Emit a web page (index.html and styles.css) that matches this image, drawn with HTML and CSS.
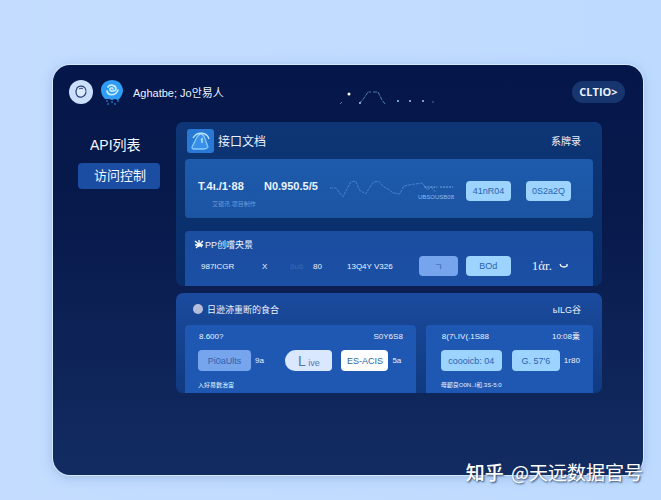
FILE: index.html
```html
<!DOCTYPE html>
<html lang="zh-CN">
    <head>
        <meta charset="UTF-8">
        <meta name="viewport" content="width=device-width, initial-scale=1.0">
        <title>接口文档</title>
        <link rel="stylesheet" href="styles.css">
    </head>
    <body>
        <div class="window">
            <header class="header">
                <svg class="avatar" viewBox="0 0 24 24">
                    <circle cx="12" cy="12" r="12" fill="#c9dffc"/>
                    <path d="M8 8C9 6 14 5 16 8C18 11 17 16 13 17C9 18 7 15 7 12C7 10 8 9 8 8Z" fill="#dceafd" stroke="#23406f" stroke-width="1.2"/>
                    <path d="M10 9C11 8 13 8 14 9" fill="none" stroke="#23406f"/>
                </svg>
                <svg class="badge" viewBox="0 0 24 26">
                    <path d="M5 3Q12-1 19 3Q23 7 23 12Q22 18 18 21L15 20L12 21L9 20L5 20Q1 16 1 11Q1 6 5 3Z" fill="#2f9df5"/>
                    <path d="M8 8C10 5 16 6 16 10C16 12 11 13 10 11C9 9 13 8 13 10M7 12C8 17 16 17 18 11" fill="none" stroke="#c5ebff" stroke-width="1.7" stroke-linecap="round"/>
                    <path d="M6 22h2M7 25h2M11 23h2M14 25h2M17 22h2" stroke="#1b6cc0" stroke-width="1.5"/>
                </svg>
                <h1 class="brand">Aghatbe; Jo안易人</h1>
                <svg class="spark" viewBox="0 0 96 16">
                    <circle cx="10" cy="4" r="1.5" fill="#fff"/>
                    <path d="M1 14l2-2M20 13l3-2 6-9h3M34 2h5l4 8 3 4" fill="none" stroke="#4d81a8" stroke-dasharray="4 1"/>
                    <g fill="#a9c8e8">
                        <circle cx="21" cy="13" r="1"/>
                        <circle cx="59" cy="11" r="1"/>
                        <circle cx="71" cy="11" r="1"/>
                        <circle cx="84" cy="11" r="1"/>
                        <circle cx="94" cy="12" r="1" fill="#35557f"/>
                    </g>
                </svg>
                <button class="pill">CLTIO&gt;</button>
            </header>

            <div class="layout">
                <nav class="sidebar">
                    <a href="#" class="nav-link">API列表</a>
                    <a href="#" class="nav-link active">访问控制</a>
                </nav>

                <main class="content">
                    <section class="panel panel-docs">
                        <div class="panel-header">
                            <svg class="panel-icon" viewBox="0 0 27 24">
                                <rect width="27" height="24" rx="3" fill="#2878d4"/>
                                <path d="M5 18L10 8Q13 3 17 7L21 18Q20 20 17 20H7Q5 20 5 18Z" fill="#3990e8" stroke="#86ccff" stroke-width="1.3"/>
                                <path d="M6 9C10 2 20 3 22 10M14 11l1-1v4" fill="none" stroke="#b9e5ff" stroke-width="1.4"/>
                            </svg>
                            <h2 class="panel-title">接口文档</h2>
                            <a href="#" class="more">系牌录</a>
                        </div>

                        <div class="card card-stats">
                            <div class="stat">
                                <strong>T.4ι./1·88</strong>
                                <small>艾锁讯.项目制作</small>
                            </div>
                            <strong class="stat">N0.950.5/5</strong>
                            <div class="chart">
                                <svg viewBox="0 0 126 22">
                                    <path d="M0 10h6l7 9 8-15 5-1 4 9 6 4 8-12 5-1 6 6 4 2 5 4 7 1 4-8 10-2 9-1 5 7 4-3 4 5" fill="none" stroke="#4585cc" stroke-dasharray="3 1"/>
                                    <path d="M96 9h13M112 9h13" stroke="#76aee8" stroke-dasharray="2 1"/>
                                </svg>
                                <small>UBSOUSB08</small>
                            </div>
                            <button class="btn">41nR04</button>
                            <button class="btn">0S2a2Q</button>
                        </div>

                        <div class="card card-keys">
                            <h3 class="card-title">
                                <svg viewBox="0 0 10 10">
                                    <path d="M1 2l7 6M9 2L2 9M5 1v7M1 6h8" stroke="#fff" stroke-width="1.3"/>
                                </svg>
                                PP创嚐央景
                            </h3>
                            <div class="key-row">
                                <span>987ICGR</span>
                                <span>X</span>
                                <span class="faint">8u6</span>
                                <span>80</span>
                                <span>13Q4Y V326</span>
                                <button class="btn btn-muted">ㄱ</button>
                                <button class="btn">BOd</button>
                                <span class="state">1ἀr.</span>
                                <svg class="chevron" viewBox="0 0 10 6">
                                    <path d="M1 1l1 2q3 2 6 0V1" fill="none" stroke="#fff" stroke-width="1.3"/>
                                </svg>
                            </div>
                        </div>
                    </section>

                    <section class="panel panel-logs">
                        <div class="panel-header">
                            <span class="dot"></span>
                            <h2 class="logs-title">日逊洂重断的食合</h2>
                            <a href="#" class="more small">ьILG谷</a>
                        </div>
                        <div class="cards">
                            <div class="card log">
                                <div class="log-top"><span>8.600?</span><span>S0Y6S8</span></div>
                                <div class="log-row">
                                    <button class="btn btn-muted wide">Pi0aUlts</button>
                                    <span class="count">9a</span>
                                    <button class="btn btn-live"><b>L</b> ive</button>
                                    <button class="btn btn-white">ES-ACIS</button>
                                    <span class="count">5a</span>
                                </div>
                                <small>入好易數治宙</small>
                            </div>
                            <div class="card log">
                                <div class="log-top"><span>8(7\.IV(.1S88</span><span>10:08乗</span></div>
                                <div class="log-row">
                                    <button class="btn wide">coooicb: 04</button>
                                    <button class="btn btn-value">G. 57'6</button>
                                    <span class="count">1r80</span>
                                </div>
                                <small>母郵良O0N..I和.3S-5:0</small>
                            </div>
                        </div>
                    </section>
                </main>
            </div>
        </div>
        <div class="watermark"><b>知乎</b> @天远数据官号</div>
    </body>
</html>
```

FILE: styles.css
```css
* {
    margin: 0;
    padding: 0;
    box-sizing: border-box;
}

body {
    min-height: 100vh;
    display: flex;
    padding: 65px 18px 25px 53px;
    background: linear-gradient(90deg, #c3dcff, #bedbff);
    font-family: "Liberation Sans", "Noto Sans CJK SC", sans-serif;
    color: #eaf3ff;
}

.window {
    flex: 1;
    min-width: 0;
    padding: 14px 18px 24px 16px;
    border-radius: 17px;
    background: linear-gradient(180deg, #05164a 0%, #08194b 35%, #122c62 100%);
    box-shadow: 0 0 0 1px #d4e8ff, 0 2px 12px rgba(80, 120, 180, 0.35);
}

svg {
    display: block;
    flex-shrink: 0;
}

.header {
    display: flex;
    align-items: center;
    height: 25px;
}

.avatar {
    width: 24px;
    height: 24px;
}

.badge {
    width: 24px;
    height: 26px;
    margin-left: 7px;
}

.brand {
    margin-left: 9px;
    font-size: 11px;
    font-weight: normal;
    white-space: nowrap;
}

.spark {
    width: 96px;
    height: 16px;
    margin: 12px auto 0 115px;
}

.pill {
    width: 53px;
    height: 22px;
    border: none;
    border-radius: 11px;
    background-color: #17366f;
    color: #eaf3ff;
    font: bold 11px "Open Sans", sans-serif;
}

.layout {
    display: flex;
    gap: 16px;
    padding: 18px 23px 0 9px;
}

.sidebar {
    width: 82px;
    padding-top: 10px;
}

.nav-link {
    display: block;
    height: 26px;
    line-height: 26px;
    margin-bottom: 5px;
    padding-left: 12px;
    border-radius: 4px;
    color: #f4f8ff;
    font-size: 14px;
    text-decoration: none;
    white-space: nowrap;
}

.nav-link.active {
    padding-left: 16px;
    background-color: #1b4ea3;
    font-size: 13px;
}

.content {
    flex: 1;
    min-width: 0;
}

.panel {
    padding: 0 9px;
    border-radius: 7px;
    margin-bottom: 7px;
}

.panel-docs {
    background: linear-gradient(180deg, #0e3575, #082d69);
}

.panel-logs {
    background: linear-gradient(180deg, #1b4b9e, #103a80);
}

.panel-header {
    display: flex;
    align-items: center;
    height: 37px;
    padding: 0 12px 0 2px;
}

.panel-logs .panel-header {
    height: 32px;
    padding-left: 8px;
}

.panel-icon {
    width: 27px;
    height: 24px;
}

.panel-title {
    margin-left: 4px;
    font-size: 12px;
    font-weight: normal;
}

.more {
    margin-left: auto;
    color: #eaf3ff;
    font-size: 10px;
    text-decoration: none;
}

.more.small,
.logs-title {
    font-size: 9px;
    font-weight: normal;
}

.logs-title {
    margin-left: 4px;
}

.dot {
    width: 10px;
    height: 10px;
    border-radius: 50%;
    background-color: #b6bddb;
}

.card {
    min-width: 0;
    border-radius: 4px;
    font-size: 8px;
}

.card-stats {
    display: flex;
    height: 59px;
    margin-bottom: 13px;
    padding: 19px 22px 0 13px;
    background: linear-gradient(180deg, #1e5bad, #1b54a2);
}

.stat {
    width: 66px;
    line-height: 16px;
    font-size: 11px;
    white-space: nowrap;
}

.stat small {
    display: block;
    margin: 2px 0 0 14px;
    color: #6c9bd9;
    font-size: 6px;
    font-weight: normal;
}

.chart {
    flex: 1;
    min-width: 0;
    color: #8ebaf0;
    text-align: right;
    line-height: 8px;
}

.chart svg {
    width: 100%;
    height: 22px;
    margin-bottom: -7px;
}

.chart small {
    font-size: 6px;
}

.btn {
    width: 45px;
    height: 20px;
    flex-shrink: 0;
    border: none;
    border-radius: 4px;
    background-color: #9dd3ff;
    color: #2b64ae;
    font-family: "Liberation Sans", "Noto Sans CJK SC", sans-serif;
    font-size: 9px;
    white-space: nowrap;
}

.card-stats .btn {
    margin: 3px 0 0 15px;
}

.card-stats .chart + .btn {
    margin-left: 12px;
}

.card-keys {
    height: 55px;
    padding: 5px 24px 0 9px;
    border-radius: 4px 4px 0 0;
    background: linear-gradient(180deg, #1b4da0, #1b50a5);
}

.card-title {
    display: flex;
    align-items: center;
    height: 16px;
    font-size: 9px;
    font-weight: normal;
}

.card-title svg {
    width: 10px;
    height: 10px;
    margin-right: 1px;
}

.key-row {
    display: flex;
    align-items: center;
    padding-left: 7px;
    margin-top: 4px;
    white-space: nowrap;
}

.key-row span:nth-child(1) {
    width: 61px;
}

.key-row span:nth-child(2) {
    width: 28px;
}

.key-row span:nth-child(3) {
    width: 23px;
}

.key-row span:nth-child(4) {
    width: 34px;
}

.key-row .faint {
    color: #3869b7;
}

.key-row .btn {
    margin-left: 8px;
}

.key-row .btn-muted {
    margin-left: auto;
}

.key-row .state {
    margin-left: 21px;
    font: 13px "Liberation Serif", serif;
}

.key-row .chevron {
    width: 10px;
    height: 6px;
    margin-left: 7px;
}

.btn-muted {
    width: 39px;
    background-color: #76a5ee;
    color: #315fac;
}

.cards {
    display: grid;
    grid-template-columns: 232fr 168fr;
    gap: 10px;
}

.log {
    height: 68px;
    padding: 6px 12px 0 13px;
    border-radius: 4px 4px 0 0;
    background-color: #1e58b2;
}

.log + .log {
    padding-left: 15px;
}

.log-top {
    display: flex;
    justify-content: space-between;
    height: 12px;
    line-height: 12px;
    padding: 0 1px;
}

.log-row {
    display: flex;
    align-items: center;
    margin-top: 7px;
}

.log .btn {
    height: 21px;
}

.log .btn-live {
    width: 47px;
    margin-left: 19px;
    border-radius: 11px 4px 4px 10px;
    background-color: #d9e8ff;
    color: #4e76b5;
}

.btn-live b {
    font-size: 14px;
    font-weight: normal;
}

.log .btn-white {
    width: 47px;
    margin-left: 9px;
    background-color: #fff;
}

.log .wide {
    width: 53px;
}

.log + .log .wide {
    width: 61px;
}

.log .btn-value {
    width: 48px;
    margin-left: 10px;
}

.count {
    width: 13px;
    margin-left: 4px;
    white-space: nowrap;
}

.log small {
    display: block;
    margin-top: 8px;
    font-size: 6px;
    line-height: 12px;
    white-space: nowrap;
}

/* lies over the lower edge of the window */
.watermark {
    position: absolute;
    right: 18px;
    bottom: 13px;
    color: #fff;
    font-family: "Noto Sans CJK SC", sans-serif;
    font-size: 19px;
    line-height: 30px;
    text-shadow: 1px 1px 2px #253c61;
}

.watermark b {
    margin-right: 3px;
    font-weight: 500;
}
```
